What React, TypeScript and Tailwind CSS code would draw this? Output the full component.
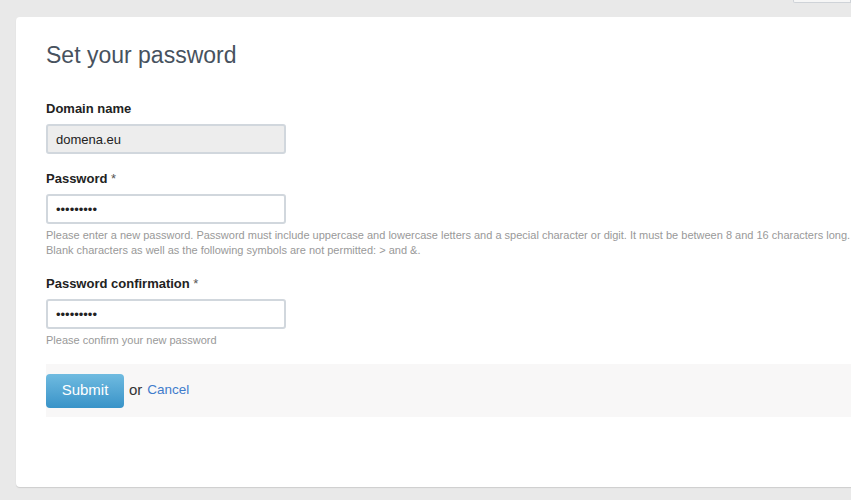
import React from 'react';

const Field = ({
  label,
  required,
  children,
  help,
}: {
  label: string;
  required?: boolean;
  children: React.ReactNode;
  help?: React.ReactNode;
}) => (
  <div>
    <label className="block text-[13px] leading-4 font-bold text-[#222]">
      {label}
      {required && <span className="font-normal text-[#555]"> *</span>}
    </label>
    <div className="mt-[7px]">{children}</div>
    {help && <p className="mt-1 text-[11px] leading-[15px] text-[#999]">{help}</p>}
  </div>
);

const inputCls =
  'block w-[240px] h-[30px] px-2 rounded-[3px] border-2 border-[#d1d7dd] text-[13px] text-[#222] outline-none';

const App = () => {
  return (
    <div className="min-h-[500px] bg-[#e9e9e9] font-['Liberation_Sans',Arial,sans-serif] overflow-hidden">
      {/* top strip with the edge of a menu */}
      <div className="h-[17px] flex justify-end">
        <div className="w-[58px] h-[3px] bg-[#f6f6f6] border border-t-0 border-[#cfd3d8] rounded-bl-[2px]" />
      </div>

      <div className="ml-4 -mr-4 bg-white rounded-[4px] shadow-[0_1px_1px_rgba(0,0,0,0.12)] pl-[30px] pt-[24px] pb-[70px]">
        <h1 className="text-[23px] leading-[28px] text-[#47525e]">Set your password</h1>

        <div className="mt-[32px] flex flex-col">
          <Field label="Domain name">
            <input className={inputCls + ' bg-[#ededed]'} defaultValue="domena.eu" readOnly />
          </Field>
          <div className="mt-[17px]">
            <Field
              label="Password"
              required
              help={
                <>
                  Please enter a new password. Password must include uppercase and lowercase letters and a special
                  character or digit. It must be between 8 and 16 characters long.
                  <br />
                  Blank characters as well as the following symbols are not permitted: &gt; and &amp;.
                </>
              }
            >
              <input type="password" className={inputCls + ' bg-white'} defaultValue="abcdefghi" readOnly />
            </Field>
          </div>
          <div className="mt-[18px]">
            <Field label="Password confirmation" required help="Please confirm your new password">
              <input type="password" className={inputCls + ' bg-white'} defaultValue="abcdefghi" readOnly />
            </Field>
          </div>
        </div>

        <div className="mt-4 h-[53px] bg-[#f8f7f7] flex items-center gap-[5px]">
          <button className="w-[78px] h-[34px] rounded-[4px] bg-gradient-to-b from-[#6fbbe0] to-[#3893c8] text-white text-[15px]">
            Submit
          </button>
          <span className="text-[15px] text-[#333]">or</span>
          <a href="#" className="text-[13.5px] text-[#3f7ccc]">
            Cancel
          </a>
        </div>
      </div>
    </div>
  );
};

export default App;
